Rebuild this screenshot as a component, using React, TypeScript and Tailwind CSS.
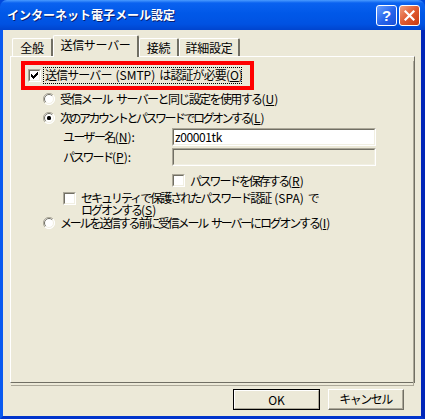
import React from 'react'

const FONT = { fontFamily: '"Noto Sans CJK JP", "Noto Sans", sans-serif' }

function Key({ k }: { k: string }) {
  return (
    <span className="tracking-normal">
      (<span className="underline underline-offset-[1px]">{k}</span>)
    </span>
  )
}

function Sp() {
  return <span className="inline-block w-[4px]" />
}

function CheckBox({ checked }: { checked?: boolean }) {
  return (
    <span className="flex h-[13px] w-[13px] shrink-0 items-center justify-center border-t border-l border-t-[#ACA899] border-l-[#ACA899] border-r border-b border-r-white border-b-white">
      <span className="flex h-[11px] w-[11px] items-center justify-center border-t border-l border-t-[#716F64] border-l-[#716F64] border-r border-b border-r-[#F1EFE2] border-b-[#F1EFE2] bg-white">
        {checked && (
          <svg width="7" height="7" viewBox="0 0 7 7">
            <path d="M0 2h1v1h1v1h1v-1h1v-1h1v-1h1v-1h1v3h-1v1h-1v1h-1v1h-1v1h-1v-1h-1v-1h-1z" fill="#000" />
          </svg>
        )}
      </span>
    </span>
  )
}

function Radio({ checked }: { checked?: boolean }) {
  return (
    <svg width="12" height="12" viewBox="0 0 12 12" className="shrink-0">
      <circle cx="6" cy="6" r="5.5" fill="#fff" />
      <path d="M10 2 A5.5 5.5 0 0 0 2 10" fill="none" stroke="#ACA899" strokeWidth="1" />
      <path d="M9.2 2.8 A4.5 4.5 0 0 0 2.8 9.2" fill="none" stroke="#716F64" strokeWidth="1" />
      <path d="M2 10 A5.5 5.5 0 0 0 10 2" fill="none" stroke="#fff" strokeWidth="1" />
      <path d="M2.8 9.2 A4.5 4.5 0 0 0 9.2 2.8" fill="none" stroke="#F1EFE2" strokeWidth="1" />
      {checked && <rect x="4" y="4" width="4" height="4" rx="1.5" fill="#000" />}
    </svg>
  )
}

function TextBox({ value, disabled }: { value?: string; disabled?: boolean }) {
  return (
    <div className="h-[18px] w-[204px] border-t border-l border-t-[#ACA899] border-l-[#ACA899] border-r border-b border-r-white border-b-white">
      <div
        className={`flex h-full items-center border-t border-l border-t-[#716F64] border-l-[#716F64] border-r border-b border-r-[#F1EFE2] border-b-[#F1EFE2] pl-[1px] text-[12px] leading-none tracking-[-0.4px] ${
          disabled ? 'bg-[#ECE9D8]' : 'bg-white'
        }`}
      >
        {value}
      </div>
    </div>
  )
}

function Tab({ label, selected, w }: { label: string; selected?: boolean; w: string }) {
  return (
    <div
      className={`flex items-start justify-center rounded-t-[2px] border-t border-l border-t-white border-l-white border-r-2 border-r-[#716F64] bg-[#ECE9D8] text-[12px] leading-none tracking-[-0.3px] ${w} ${
        selected ? 'relative z-10 -mb-[1px] h-[22px] pt-[3px]' : 'h-[18px] pt-[3px]'
      }`}
    >
      {label}
    </div>
  )
}

export default function App() {
  return (
    <div className="flex h-[419px] w-[425px] flex-col bg-[#0048DC] text-black" style={FONT}>
      <div className="flex h-[30px] shrink-0 items-center rounded-t-[7px] bg-[linear-gradient(to_bottom,#4A9BFF_0%,#0A62F0_10%,#0058E8_45%,#0052E2_80%,#0044CE_100%)] pl-[7px] pr-[5px]">
        <span className="text-[12px] font-bold leading-none text-white [text-shadow:1px_1px_#0A1E70]">
          インターネット電子メール設定
        </span>
        <div className="ml-auto flex gap-[2px]">
          <div className="flex h-[21px] w-[21px] items-center justify-center rounded-[3px] border border-white bg-[linear-gradient(to_bottom_right,#6AA0FF,#2563EB_55%,#1A4FD8)] text-[15px] font-bold leading-none text-white" style={{ fontFamily: '"Liberation Sans", sans-serif' }}>
            ?
          </div>
          <div className="flex h-[21px] w-[21px] items-center justify-center rounded-[3px] border border-white bg-[linear-gradient(to_bottom_right,#F0A080,#E05A30_50%,#C83A10)]">
            <svg width="11" height="11" viewBox="0 0 11 11">
              <path d="M1.5 1.5L9.5 9.5M9.5 1.5L1.5 9.5" stroke="#fff" strokeWidth="2.2" strokeLinecap="square" />
            </svg>
          </div>
        </div>
      </div>

      <div className="flex flex-1 flex-col border-l-[3px] border-r-[4px] border-b-[3px] border-l-[#0A5AF0] border-r-[#0025B8] border-b-[#0034CC] bg-[#ECE9D8] pl-[7px] pt-[6px]">
        <div className="ml-[2px] flex h-[20px] items-end">
          <Tab label="全般" w="w-[41px]" />
          <Tab label="送信サーバー" w="w-[86px]" selected />
          <Tab label="接続" w="w-[40px]" />
          <Tab label="詳細設定" w="w-[61px]" />
        </div>

        <div className="h-[327px] w-[405px] border-t border-l border-t-white border-l-white border-r border-b border-r-[#716F64] border-b-[#716F64]">
          <div className="h-full border-r border-b border-r-[#ACA899] border-b-[#ACA899] text-[12px] leading-[12px]">
            <div className="ml-[10px] mt-[4px] flex h-[29px] w-[233px] items-center border-4 border-[#FF0000] pl-[3px]">
              <CheckBox checked />
              <div className="ml-[2px] h-[17px] w-[199px] whitespace-nowrap border border-dotted border-black pl-[1px] pt-[1px] tracking-[-0.9px]">
                送信サーバー<Sp /><span className="tracking-normal">(SMTP)</span><Sp />は認証が必要<Key k="O" />
              </div>
            </div>

            <div className="ml-[32px] mt-[3px] flex h-[12px] items-center gap-[5px]">
              <Radio />
              <span className="whitespace-nowrap tracking-[-1.6px]">受信メール<Sp />サーバーと同じ設定を使用する<Key k="U" /></span>
            </div>
            <div className="ml-[32px] mt-[7px] flex h-[12px] items-center gap-[5px]">
              <Radio checked />
              <span className="whitespace-nowrap tracking-[-2.5px]">次のアカウントとパスワードでログオンする<Key k="L" /></span>
            </div>

            <div className="mt-[4px] flex items-center">
              <span className="ml-[52px] w-[109px] whitespace-nowrap tracking-[-1.6px]">ユーザー名<Key k="N" />:</span>
              <TextBox value="z00001tk" />
            </div>
            <div className="mt-[2px] flex items-center">
              <span className="ml-[52px] w-[109px] whitespace-nowrap tracking-[-2.2px]">パスワード<Key k="P" />:</span>
              <TextBox disabled />
            </div>

            <div className="ml-[161px] mt-[8px] flex items-center gap-[5px]">
              <CheckBox />
              <span className="whitespace-nowrap tracking-[-2.2px]">パスワードを保存する<Key k="R" /></span>
            </div>

            <div className="ml-[52px] mt-[5px] flex items-start gap-[5px]">
              <CheckBox />
              <div className="whitespace-nowrap leading-[12px] tracking-[-2px]">
                <div>セキュリティで保護されたパスワード認証<Sp /><span className="tracking-normal">(SPA)</span><Sp />で</div>
                <div>ログオンする<Key k="S" /></div>
              </div>
            </div>

            <div className="ml-[32px] mt-[1px] flex h-[12px] items-center gap-[5px]">
              <Radio />
              <span className="whitespace-nowrap tracking-[-2.2px]">メールを送信する前に受信メール<Sp />サーバーにログオンする<Key k="I" /></span>
            </div>
          </div>
        </div>

        <div className="ml-[223px] mt-[6px] flex gap-[8px]">
          <div className="h-[21px] w-[87px] border border-black">
            <div className="flex h-full items-center justify-center border-t border-l border-t-white border-l-white border-r border-b border-r-[#ACA899] border-b-[#ACA899] text-[12px] leading-none">
              OK
            </div>
          </div>
          <div className="h-[21px] w-[76px] border-t border-l border-t-white border-l-white border-r border-b border-r-[#716F64] border-b-[#716F64]">
            <div className="flex h-full items-center justify-center border-r border-b border-r-[#ACA899] border-b-[#ACA899] text-[12px] leading-none tracking-[-1.5px]">
              キャンセル
            </div>
          </div>
        </div>
      </div>
    </div>
  )
}
